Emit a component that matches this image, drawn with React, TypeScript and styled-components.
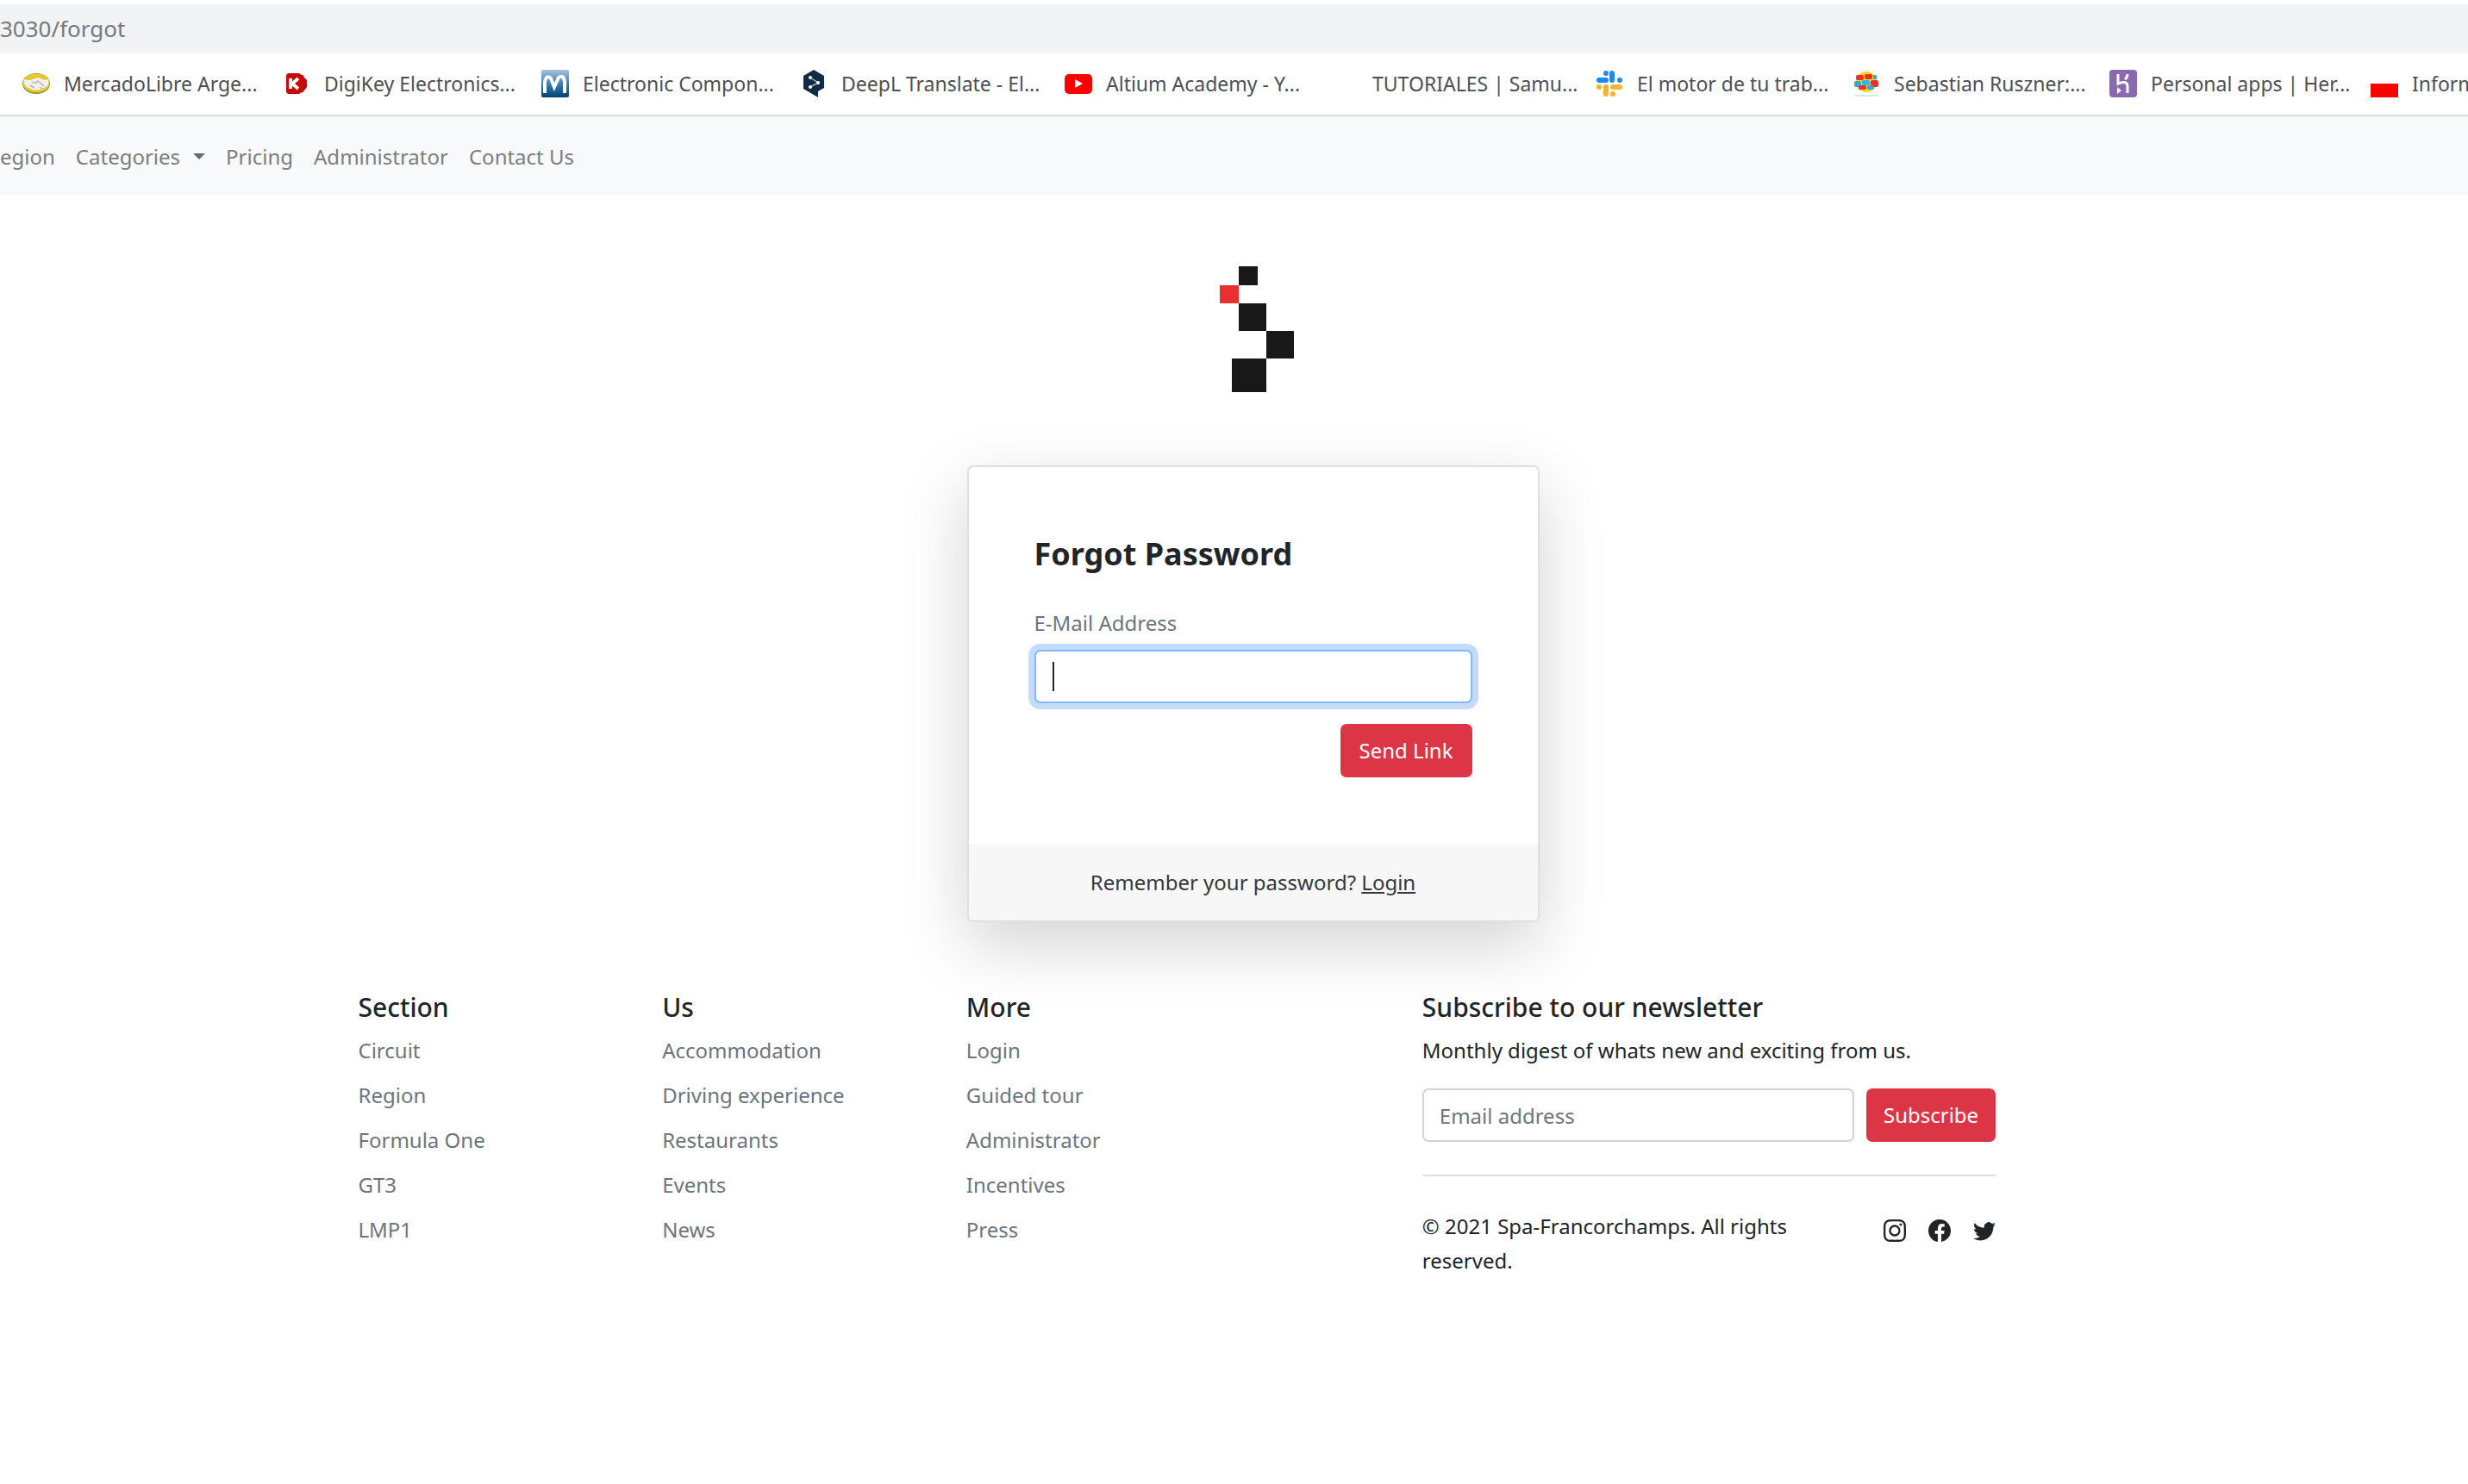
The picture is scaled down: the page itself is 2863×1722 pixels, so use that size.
import React from "react";
import styled, { createGlobalStyle } from "styled-components";
import { BsInstagram, BsFacebook, BsTwitter } from "react-icons/bs";

const GlobalStyle = createGlobalStyle`
  *, *::before, *::after { box-sizing: border-box; }
  body {
    margin: 0;
    background: #fff;
    color: #212529;
    font-family: "Noto Sans", "Open Sans", sans-serif;
    font-size: 24px;
    line-height: 40px;
    overflow-x: hidden;
  }
  h1, h2, p, ul { margin: 0; padding: 0; }
  ul { list-style: none; }
  a { color: inherit; text-decoration: none; }
  input, button { font: inherit; }
`;

const AddressBar = styled.div`
  margin-top: 5px;
  height: 56px;
  background: #f2f3f4;
  color: #75797e;
  font-size: 26px;
  line-height: 56px;
`;

const Bookmarks = styled.nav`
  display: grid;
  grid-template-columns: 302px 300px 300px 307px 309px 307px 298px 298px 303px 1fr;
  align-items: center;
  height: 74px;
  padding-left: 26px;
  border-bottom: 2px solid #dcddde;
  overflow: hidden;
`;

const Bookmark = styled.a`
  display: flex;
  align-items: center;
  gap: 16px;
  color: #4c5055;
  font-size: 23px;
  white-space: nowrap;
  svg { flex: none; width: 32px; height: 32px; }
`;

const SiteNav = styled.nav`
  display: flex;
  align-items: center;
  gap: 24px;
  height: 91px;
  padding-top: 2px;
  background: #f8f9fa;
  color: #7b7d7f;
`;

const NavLink = styled.a`
  display: flex;
  align-items: center;
  gap: 15px;
`;

const Caret = styled.span`
  border-top: 7px solid #66686a;
  border-left: 7px solid transparent;
  border-right: 7px solid transparent;
`;

const Page = styled.div`
  padding-left: 44px;
`;

const Main = styled.main`
  display: flex;
  flex-direction: column;
  align-items: center;
  padding-top: 83px;
`;

const Logo = styled.svg`
  width: 94px;
  height: 146px;
`;

const Card = styled.section`
  width: 664px;
  max-width: 100%;
  margin-top: 85px;
  border: 2px solid #dfdfdf;
  border-radius: 7px;
  background: #fff;
  box-shadow: 0 26px 78px rgba(0, 0, 0, 0.175);
`;

const CardBody = styled.form`
  display: flex;
  flex-direction: column;
  padding: 76px 76px 78px;
`;

const Title = styled.h1`
  font-size: 36px;
  line-height: 50px;
  font-weight: 700;
`;

const Label = styled.label`
  margin: 35px 0 11px;
  color: #6c757d;
`;

const Field = styled.div`
  position: relative;
  display: flex;
`;

const TextInput = styled.input`
  flex: 1;
  min-width: 0;
  height: 62px;
  padding: 0 18px;
  border: 2px solid #ced4da;
  border-radius: 7px;
  background: #fff;
  color: #212529;
  outline: none;
  &::placeholder { color: #6c757d; opacity: 1; }
  &:focus {
    border-color: #86b7fe;
    box-shadow: 0 0 0 7px #c2dbfe;
    caret-color: transparent;
  }
`;

const TextCursor = styled.span`
  position: absolute;
  left: 21px;
  top: 14px;
  width: 2px;
  height: 34px;
  background: #212529;
  pointer-events: none;
`;

const Button = styled.button`
  height: 62px;
  padding: 0 20px;
  border: 0;
  border-radius: 7px;
  background: #dc3545;
  color: #fff;
`;

const SendButton = styled(Button)`
  align-self: flex-end;
  margin-top: 24px;
  padding: 0 22px;
`;

const CardFooter = styled.p`
  padding: 24px;
  background: #f7f7f7;
  border-radius: 0 0 5px 5px;
  color: #34383c;
  text-align: center;
  a { text-decoration: underline; }
`;

const Footer = styled.footer`
  display: grid;
  grid-template-columns: repeat(12, 1fr);
  max-width: 2116px;
  margin: 79px auto 0;
`;

const LinkColumn = styled.section`
  grid-column: span 2;
  padding: 0 20px;
`;

const Newsletter = styled.section`
  grid-column: 8 / span 4;
  padding: 0 20px;
`;

const Heading = styled.h2`
  margin-bottom: 10px;
  font-size: 30px;
  line-height: 40px;
  font-weight: 500;
`;

const LinkList = styled.ul`
  display: grid;
  gap: 12px;
  color: #6c757d;
`;

const SubscribeRow = styled.form`
  display: flex;
  gap: 14px;
  margin-top: 24px;
`;

const Legal = styled.div`
  display: flex;
  justify-content: space-between;
  gap: 80px;
  margin-top: 38px;
  padding-top: 38px;
  border-top: 2px solid #dedfdf;
`;

const Social = styled.div`
  display: flex;
  gap: 26px;
  padding-top: 12px;
  svg { display: block; width: 26px; height: 26px; }
`;

const bookmarks: { name: string; icon: React.ReactNode }[] = [
  {
    name: "MercadoLibre Arge...",
    icon: (
      <svg viewBox="0 0 32 32">
        <ellipse cx="16" cy="16" rx="16" ry="12" fill="#8f8640" />
        <ellipse cx="16" cy="15.5" rx="15.5" ry="11" fill="#e3c92c" />
        <path d="M2 11Q8 13 12 11Q17 8 21 10Q26 13 30 11Q32 19 25 21Q16 26 7 21Q0 18 2 11Z" fill="#f1f1f1" />
        <path d="M11 14Q15 17 18 13L25 19M9 18L14 21M20 20L23 22" stroke="#b5b5b5" strokeWidth="1.5" fill="none" />
      </svg>
    ),
  },
  {
    name: "DigiKey Electronics...",
    icon: (
      <svg viewBox="0 0 32 32">
        <path d="M6 4H19L22 6H24V8L28 12V20L24 25V26H22L19 28H6L4 26V6Z" fill="#cc0505" />
        <path d="M9 10V22M18 10L11 16L18 22" stroke="#fff" strokeWidth="4" fill="none" />
      </svg>
    ),
  },
  {
    name: "Electronic Compon...",
    icon: (
      <svg viewBox="0 0 32 32">
        <defs>
          <linearGradient id="mouser" x1="0" y1="0" x2="0" y2="1">
            <stop offset="0" stopColor="#a9c0da" />
            <stop offset="0.5" stopColor="#3f7fb5" />
            <stop offset="1" stopColor="#004074" />
          </linearGradient>
        </defs>
        <rect width="32" height="32" rx="2" fill="url(#mouser)" />
        <path d="M4 27V14Q6 5 11 10L15 20L20 9Q26 5 27 14V27" stroke="#fff" strokeWidth="4" fill="none" />
      </svg>
    ),
  },
  {
    name: "DeepL Translate - El...",
    icon: (
      <svg viewBox="0 0 32 32">
        <path d="M16 0L28 7V21L21 25V32L4 22V7Z" fill="#0f2b46" />
        <path d="M12 9L21 15L12 20" stroke="#9fb0c0" strokeWidth="1.5" fill="none" />
        <circle cx="12" cy="9" r="2" fill="#fff" />
        <circle cx="21" cy="15" r="2" fill="#fff" />
        <circle cx="12" cy="20" r="2" fill="#fff" />
      </svg>
    ),
  },
  {
    name: "Altium Academy - Y...",
    icon: (
      <svg viewBox="0 0 32 32">
        <rect y="5" width="32" height="23" rx="5" fill="#f00" />
        <path d="M12 11L21 16L12 21Z" fill="#fff" />
      </svg>
    ),
  },
  { name: "TUTORIALES | Samu...", icon: <svg viewBox="0 0 32 32" /> },
  {
    name: "El motor de tu trab...",
    icon: (
      <svg viewBox="0 0 32 32" strokeWidth="6" strokeLinecap="round">
        <path d="M4 12H12M12 4V4.1" stroke="#1e88f7" />
        <path d="M19 4V12M28 12V12.1" stroke="#1e88f7" />
        <path d="M20 20H28M20 28V28.1" stroke="#f5b32f" />
        <path d="M12 20V28M4 20V20.1" stroke="#f5b32f" />
      </svg>
    ),
  },
  {
    name: "Sebastian Ruszner:...",
    icon: (
      <svg viewBox="0 0 32 32">
        <ellipse cx="16" cy="14" rx="12" ry="12" fill="#f6d52a" />
        <rect x="4" y="6" width="9" height="6" rx="2" fill="#e8312a" />
        <rect x="14" y="5" width="9" height="6" rx="2" fill="#e8312a" />
        <rect x="2" y="13" width="8" height="7" rx="2" fill="#35a9c9" />
        <rect x="11" y="12" width="9" height="6" rx="2" fill="#2fb4e6" />
        <rect x="21" y="12" width="9" height="8" rx="2" fill="#e8312a" />
        <rect x="7" y="18" width="9" height="5" rx="2" fill="#e8312a" />
        <rect x="17" y="18" width="8" height="5" rx="2" fill="#35a9c9" />
        <rect x="24" y="6" width="4" height="5" rx="1" fill="#35a9c9" />
        <rect x="2" y="29" width="28" height="2" fill="#cdeaf5" />
      </svg>
    ),
  },
  {
    name: "Personal apps | Her...",
    icon: (
      <svg viewBox="0 0 32 32">
        <rect width="32" height="32" rx="4" fill="#8a69b0" />
        <path d="M10 5V16Q21 12 21 19V27M21 5Q21 9 18 11" stroke="#fff" strokeWidth="3" fill="none" />
        <path d="M9 20L14 24L9 28Z" fill="#fff" />
      </svg>
    ),
  },
  {
    name: "Inform",
    icon: (
      <svg viewBox="0 0 32 32">
        <rect y="16" width="32" height="16" fill="#f00" />
      </svg>
    ),
  },
];

const columns = [
  { title: "Section", links: ["Circuit", "Region", "Formula One", "GT3", "LMP1"] },
  { title: "Us", links: ["Accommodation", "Driving experience", "Restaurants", "Events", "News"] },
  { title: "More", links: ["Login", "Guided tour", "Administrator", "Incentives", "Press"] },
];

export default function App() {
  return (
    <>
      <GlobalStyle />
      <AddressBar>3030/forgot</AddressBar>
      <Bookmarks aria-label="Bookmarks">
        {bookmarks.map((b) => (
          <Bookmark href="#" key={b.name}>
            {b.icon}
            {b.name}
          </Bookmark>
        ))}
      </Bookmarks>
      <SiteNav aria-label="Site">
        <NavLink href="#">egion</NavLink>
        <NavLink href="#">
          Categories <Caret />
        </NavLink>
        <NavLink href="#">Pricing</NavLink>
        <NavLink href="#">Administrator</NavLink>
        <NavLink href="#">Contact Us</NavLink>
      </SiteNav>
      <Page>
        <Main>
          <Logo viewBox="-8 0 94 146" role="img" aria-label="Spa-Francorchamps">
            <path d="M22 0H44V22H22ZM22 43H54V75H22ZM54 75H86V107H54ZM14 107H54V146H14Z" fill="#181818" />
            <path d="M0 22H22V43H0Z" fill="#e8302f" />
          </Logo>
          <Card>
            <CardBody>
              <Title>Forgot Password</Title>
              <Label htmlFor="email">E-Mail Address</Label>
              <Field>
                <TextInput id="email" type="email" autoFocus />
                <TextCursor />
              </Field>
              <SendButton type="button">Send Link</SendButton>
            </CardBody>
            <CardFooter>
              Remember your password? <a href="#">Login</a>
            </CardFooter>
          </Card>
        </Main>
        <Footer>
          {columns.map((c) => (
            <LinkColumn key={c.title}>
              <Heading>{c.title}</Heading>
              <LinkList>
                {c.links.map((l) => (
                  <li key={l}>
                    <a href="#">{l}</a>
                  </li>
                ))}
              </LinkList>
            </LinkColumn>
          ))}
          <Newsletter>
            <Heading>Subscribe to our newsletter</Heading>
            <p>Monthly digest of whats new and exciting from us.</p>
            <SubscribeRow>
              <TextInput type="email" aria-label="Email address" placeholder="Email address" />
              <Button type="button">Subscribe</Button>
            </SubscribeRow>
            <Legal>
              <p>© 2021 Spa-Francorchamps. All rights reserved.</p>
              <Social>
                <a href="#" aria-label="Instagram"><BsInstagram /></a>
                <a href="#" aria-label="Facebook"><BsFacebook /></a>
                <a href="#" aria-label="Twitter"><BsTwitter /></a>
              </Social>
            </Legal>
          </Newsletter>
        </Footer>
      </Page>
    </>
  );
}
